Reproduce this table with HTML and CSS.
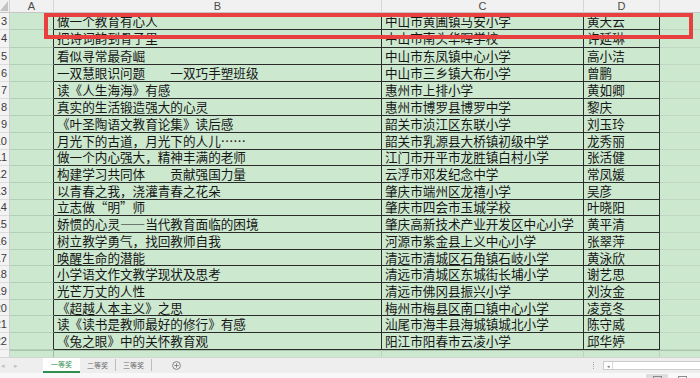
FILE: index.html
```html
<!DOCTYPE html>
<html lang="zh-CN">
<head>
<meta charset="utf-8">
<title>一等奖</title>
<link rel="stylesheet" href="styles.css">
</head>
<body>
<div class="app">
  <div class="sheet">
    <div class="corner"><span class="tri"></span></div>
    <div class="ch">A</div>
    <div class="ch">B</div>
    <div class="ch">C</div>
    <div class="ch">D</div>
    <div class="ch ch-last"></div>

    <div class="rh">3</div><div class="ca"></div><div class="cx">做一个教育有心人</div><div class="cx">中山市黄圃镇马安小学</div><div class="cx">黄天云</div><div class="ce"></div>
    <div class="rh">4</div><div class="ca"></div><div class="cx">把诗词韵到骨子里</div><div class="cx">中山市南头华晖学校</div><div class="cx">许延琳</div><div class="ce"></div>
    <div class="rh">5</div><div class="ca"></div><div class="cx">看似寻常最奇崛</div><div class="cx">中山市东凤镇中心小学</div><div class="cx">高小洁</div><div class="ce"></div>
    <div class="rh">6</div><div class="ca"></div><div class="cx">一双慧眼识问题　　一双巧手塑班级</div><div class="cx">中山市三乡镇大布小学</div><div class="cx">曾鹏</div><div class="ce"></div>
    <div class="rh">7</div><div class="ca"></div><div class="cx">读《人生海海》有感</div><div class="cx">惠州市上排小学</div><div class="cx">黄如卿</div><div class="ce"></div>
    <div class="rh">8</div><div class="ca"></div><div class="cx">真实的生活锻造强大的心灵</div><div class="cx">惠州市博罗县博罗中学</div><div class="cx">黎庆</div><div class="ce"></div>
    <div class="rh">9</div><div class="ca"></div><div class="cx">《叶圣陶语文教育论集》读后感</div><div class="cx">韶关市浈江区东联小学</div><div class="cx">刘玉玲</div><div class="ce"></div>
    <div class="rh">10</div><div class="ca"></div><div class="cx">月光下的古道，月光下的人儿……</div><div class="cx">韶关市乳源县大桥镇初级中学</div><div class="cx">龙秀丽</div><div class="ce"></div>
    <div class="rh">11</div><div class="ca"></div><div class="cx">做一个内心强大，精神丰满的老师</div><div class="cx">江门市开平市龙胜镇白村小学</div><div class="cx">张活健</div><div class="ce"></div>
    <div class="rh">12</div><div class="ca"></div><div class="cx">构建学习共同体　　贡献强国力量</div><div class="cx">云浮市邓发纪念中学</div><div class="cx">常凤媛</div><div class="ce"></div>
    <div class="rh">13</div><div class="ca"></div><div class="cx">以青春之我，浇灌青春之花朵</div><div class="cx">肇庆市端州区龙禧小学</div><div class="cx">吴彦</div><div class="ce"></div>
    <div class="rh">14</div><div class="ca"></div><div class="cx">立志做“明”师</div><div class="cx">肇庆市四会市玉城学校</div><div class="cx">叶晓阳</div><div class="ce"></div>
    <div class="rh">15</div><div class="ca"></div><div class="cx">娇惯的心灵——当代教育面临的困境</div><div class="cx">肇庆高新技术产业开发区中心小学</div><div class="cx">黄平清</div><div class="ce"></div>
    <div class="rh">16</div><div class="ca"></div><div class="cx">树立教学勇气，找回教师自我</div><div class="cx">河源市紫金县上义中心小学</div><div class="cx">张翠萍</div><div class="ce"></div>
    <div class="rh">17</div><div class="ca"></div><div class="cx">唤醒生命的潜能</div><div class="cx">清远市清城区石角镇石岐小学</div><div class="cx">黄泳欣</div><div class="ce"></div>
    <div class="rh">18</div><div class="ca"></div><div class="cx">小学语文作文教学现状及思考</div><div class="cx">清远市清城区东城街长埔小学</div><div class="cx">谢艺思</div><div class="ce"></div>
    <div class="rh">19</div><div class="ca"></div><div class="cx">光芒万丈的人性</div><div class="cx">清远市佛冈县振兴小学</div><div class="cx">刘汝金</div><div class="ce"></div>
    <div class="rh">20</div><div class="ca"></div><div class="cx">《超越人本主义》之思</div><div class="cx">梅州市梅县区南口镇中心小学</div><div class="cx">凌竞冬</div><div class="ce"></div>
    <div class="rh">21</div><div class="ca"></div><div class="cx">读《读书是教师最好的修行》有感</div><div class="cx">汕尾市海丰县海城镇城北小学</div><div class="cx">陈守威</div><div class="ce"></div>
    <div class="rh">22</div><div class="ca"></div><div class="cx">《兔之眼》中的关怀教育观</div><div class="cx">阳江市阳春市云凌小学</div><div class="cx">邱华婷</div><div class="ce"></div>

    <div class="rh rh-cut"></div><div class="cz cz-a"></div><div class="cz"></div><div class="cz"></div><div class="cz"></div><div class="cz cz-e"></div>

    <div class="mark"></div>
  </div>

  <div class="tabbar">
    <div class="nav"><span class="arr">&#9666;</span><span class="arr">&#9656;</span></div>
    <div class="tab tab-on">一等奖</div>
    <div class="tab">二等奖</div>
    <div class="tab">三等奖</div>
    <div class="add">
      <svg width="9" height="9" viewBox="0 0 9 9"><circle cx="4.5" cy="4.5" r="3.9" fill="none" stroke="#7a7a7a" stroke-width="0.9"/><path d="M4.5 2.4v4.2M2.4 4.5h4.2" stroke="#7a7a7a" stroke-width="0.9"/></svg>
    </div>
    <div class="fill"></div>
    <div class="grip"></div>
    <div class="hscroll"><span class="hbtn">&#9666;</span></div>
  </div>

  <div class="status">
    <div class="vbtn vbtn-on"><span class="vicon"></span></div>
    <div class="vbtn"><span class="vicon"></span></div>
  </div>
</div>
</body>
</html>
```

FILE: styles.css
```css
html, body {
  margin: 0;
  padding: 0;
}

body {
  width: 700px;
  height: 378px;
  overflow: hidden;
  background: #f7f7f7;
  font-family: "Noto Sans CJK SC", "Noto Sans", sans-serif;
}

.app {
  display: flex;
  flex-direction: column;
  width: 700px;
  height: 378px;
}

.sheet {
  position: relative;
  display: grid;
  grid-template-columns: 10px 44px 328px 202px 76px 40px;
  grid-template-rows: 13px repeat(5, 17.3px) repeat(15, 16.7px) 7px;
  background: #cce8cf;
  overflow: hidden;
}

.sheet > div {
  box-sizing: border-box;
  min-width: 0;
}

.corner {
  position: relative;
  background: #f1f1f1;
  border-right: 1px solid #d2d2d2;
  border-bottom: 1px solid #c6c6c6;
}

.tri {
  position: absolute;
  right: 1px;
  bottom: 1px;
  width: 0;
  height: 0;
  border-left: 8px solid transparent;
  border-bottom: 10px solid #c4c4c4;
}

.ch {
  display: flex;
  align-items: center;
  justify-content: center;
  background: #f1f1f1;
  border-right: 1px solid #d6d6d6;
  border-bottom: 1px solid #c6c6c6;
  font-family: "Liberation Sans", Arial, sans-serif;
  font-size: 11px;
  line-height: 12px;
  color: #4a4a4a;
}

.ch-last {
  border-right: none;
}

.rh {
  display: flex;
  align-items: center;
  justify-content: flex-end;
  padding-right: 2px;
  background: #f3f3f3;
  border-right: 1px solid #cfcfcf;
  border-bottom: 1px solid #dcdcdc;
  font-family: "Liberation Sans", Arial, sans-serif;
  font-size: 11px;
  line-height: 12px;
  color: #3a3a3a;
  overflow: hidden;
  white-space: nowrap;
}

.rh-cut {
  border-bottom: none;
}

.ca {
  border-right: 1px solid #2b2b2b;
  border-bottom: 1px solid #b3cfb6;
}

.cx {
  display: flex;
  align-items: center;
  padding-left: 3px;
  border-right: 1px solid #2b2b2b;
  border-bottom: 1px solid #2b2b2b;
  font-size: 12.6px;
  line-height: 14px;
  color: #161616;
  white-space: pre;
  overflow: hidden;
}

.ce {
  border-bottom: 1px solid #bfd7c2;
}

.cz {
  border-right: 1px solid #bcd5bf;
  border-top: 1px solid #a9c6ac;
}

.cz-a {
  border-right: 1px solid #9fbca2;
}

.cz-e {
  border-right: none;
}

.mark {
  position: absolute;
  left: 44px;
  top: 13px;
  width: 649px;
  height: 26px;
  box-sizing: border-box;
  border: 4px solid #e8403f;
  pointer-events: none;
}

.tabbar {
  display: flex;
  align-items: stretch;
  height: 16px;
  background: #eeeeee;
  border-top: 1px solid #d4d4d4;
  box-sizing: border-box;
}

.nav {
  display: flex;
  align-items: center;
  gap: 9px;
  width: 43px;
  padding-left: 1px;
  box-sizing: border-box;
}

.arr {
  font-size: 7px;
  color: #c2c2c2;
  line-height: 7px;
}

.tab {
  align-self: center;
  display: flex;
  align-items: center;
  justify-content: center;
  width: 36px;
  height: 12px;
  box-sizing: border-box;
  border-right: 1px solid #bdbdbd;
  font-size: 7px;
  color: #6a6a6a;
  line-height: 8px;
}

.tab-on {
  align-self: stretch;
  height: auto;
  width: 37px;
  background: #ffffff;
  border-right: none;
  border-bottom: 2px solid #2f8f4e;
  color: #2f8f4e;
}

.add {
  display: flex;
  align-items: center;
  margin-left: 20px;
}

.add svg {
  display: block;
}

.fill {
  flex: 1;
}

.grip {
  align-self: center;
  width: 0;
  height: 7px;
  border-left: 1px dotted #a8a8a8;
  margin-right: 9px;
}

.hscroll {
  align-self: center;
  display: flex;
  align-items: center;
  width: 97px;
  height: 9px;
  box-sizing: border-box;
  background: #ffffff;
  border: 1px solid #cccccc;
  border-right: none;
}

.hbtn {
  display: flex;
  align-items: center;
  justify-content: center;
  width: 8px;
  height: 7px;
  border-right: 1px solid #d8d8d8;
  font-size: 5px;
  color: #777777;
  line-height: 5px;
}

.status {
  display: flex;
  justify-content: flex-end;
  align-items: flex-end;
  gap: 6px;
  height: 5px;
  background: #f8f8f8;
  overflow: hidden;
  padding-right: 10px;
}

.vbtn {
  display: flex;
  justify-content: center;
  width: 16px;
  height: 4px;
  padding-top: 2px;
  box-sizing: border-box;
}

.vbtn-on {
  width: 22px;
  background: #dedede;
}

.vicon {
  width: 9px;
  height: 6px;
  box-sizing: border-box;
  border: 1px solid #8a8a8a;
  border-bottom: none;
}
```
